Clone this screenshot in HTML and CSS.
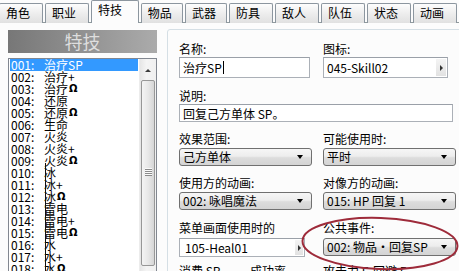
FILE: index.html
```html
<!DOCTYPE html>
<html lang="zh-CN">
<head>
<meta charset="utf-8">
<title>特技</title>
<link rel="stylesheet" href="styles.css">
</head>
<body>
<div class="tabs">
  <div class="tab">角色</div>
  <div class="tab">职业</div>
  <div class="tab sel">特技</div>
  <div class="tab">物品</div>
  <div class="tab">武器</div>
  <div class="tab">防具</div>
  <div class="tab">敌人</div>
  <div class="tab">队伍</div>
  <div class="tab">状态</div>
  <div class="tab">动画</div>
</div>
<div class="main">
  <div class="left">
    <div class="title">特技</div>
    <div class="list">
      <div class="items">
        <div class="row on"><span class="num">001:</span>治疗SP</div>
        <div class="row"><span class="num">002:</span>治疗+</div>
        <div class="row"><span class="num">003:</span>治疗<b class="om">Ω</b></div>
        <div class="row"><span class="num">004:</span>还原</div>
        <div class="row"><span class="num">005:</span>还原<b class="om">Ω</b></div>
        <div class="row"><span class="num">006:</span>生命</div>
        <div class="row"><span class="num">007:</span>火炎</div>
        <div class="row"><span class="num">008:</span>火炎+</div>
        <div class="row"><span class="num">009:</span>火炎<b class="om">Ω</b></div>
        <div class="row"><span class="num">010:</span>冰</div>
        <div class="row"><span class="num">011:</span>冰+</div>
        <div class="row"><span class="num">012:</span>冰<b class="om">Ω</b></div>
        <div class="row"><span class="num">013:</span>雷电</div>
        <div class="row"><span class="num">014:</span>雷电+</div>
        <div class="row"><span class="num">015:</span>雷电<b class="om">Ω</b></div>
        <div class="row"><span class="num">016:</span>水</div>
        <div class="row"><span class="num">017:</span>水+</div>
        <div class="row"><span class="num">018:</span>水<b class="om">Ω</b></div>
      </div>
      <div class="scroll">
        <div class="up"><span class="tri-up"></span></div>
        <div class="thumb"><div class="grip"></div></div>
      </div>
    </div>
  </div>
  <div class="group">
    <div class="grid">
      <div class="cell">
        <div class="lbl">名称:</div>
        <div class="input h21 w131">治疗SP<span class="caret"></span></div>
      </div>
      <div class="cell">
        <div class="lbl">图标:</div>
        <div class="input h21 w125 btnbox"><span>045-Skill02</span><span class="mini"><span class="tri-r"></span></span></div>
      </div>
      <div class="cell span2">
        <div class="lbl">说明:</div>
        <div class="input h18 w274">回复己方单体 SP。</div>
      </div>
      <div class="cell">
        <div class="lbl mb2">效果范围:</div>
        <div class="select">己方单体<span class="tri-d"></span></div>
      </div>
      <div class="cell">
        <div class="lbl mb2">可能使用时:</div>
        <div class="select w134">平时<span class="tri-d"></span></div>
      </div>
      <div class="cell">
        <div class="lbl mb2">使用方的动画:</div>
        <div class="select mbx">002: 咏唱魔法<span class="tri-d"></span></div>
      </div>
      <div class="cell">
        <div class="lbl mb2">对像方的动画:</div>
        <div class="select w134 mbx">015: HP 回复 1<span class="tri-d"></span></div>
      </div>
      <div class="cell">
        <div class="lbl mb3">菜单画面使用时的</div>
        <div class="input h19 w126 btnbox pad5 tight"><span>105-Heal01</span><span class="mini sm"><span class="tri-r"></span></span></div>
      </div>
      <div class="cell">
        <div class="lbl mb3">公共事件:</div>
        <div class="select w134 h19 tight">002: 物品・回复SP<span class="tri-d"></span></div>
      </div>
      <div class="cell duo">
        <span class="sub s71">消费 SP</span><span class="sub">成功率</span>
      </div>
      <div class="cell duo">
        <span class="sub s50">攻击力 F</span><span class="sub">回避 F</span>
      </div>
    </div>
  </div>
</div>
<svg class="mark" width="459" height="271" viewBox="0 0 459 271">
  <ellipse cx="380" cy="243.5" rx="77.5" ry="25.5" fill="none" stroke="#9e2b3a" stroke-width="2" transform="rotate(2 380 243.5)"/>
</svg>
</body>
</html>
```

FILE: styles.css
```css
* { box-sizing: border-box; }
html, body { margin: 0; padding: 0; }
body {
  width: 459px;
  height: 271px;
  overflow: hidden;
  position: relative;
  background: #fcfcfc;
  font-family: "Noto Sans CJK SC", "Noto Sans", sans-serif;
  font-size: 12px;
  color: #000;
}

/* tabs */
.tabs {
  display: flex;
  align-items: flex-end;
  height: 23px;
  border-bottom: 1px solid #919b9c;
  background: #fcfcfc;
}
.tab {
  width: 46px;
  height: 20px;
  margin-right: 2px;
  margin-bottom: -1px;
  padding-left: 6px;
  border: 1px solid #8c969f;
  border-bottom: none;
  border-radius: 2px 2px 0 0;
  background: linear-gradient(#fdfdfd, #ececec 55%, #e1e1e1);
  line-height: 18px;
  white-space: nowrap;
}
.tab:first-child { margin-left: -1px; }
.tab.sel {
  width: 50px;
  height: 23px;
  padding-left: 6px;
  background: #fcfcfc;
  line-height: 18px;
  position: relative;
}
.tab.sel + .tab, .tab.sel + .tab + .tab { width: 44px; }

/* main */
.main {
  display: flex;
  align-items: flex-start;
  gap: 10px;
  padding: 7px 0 0 8px;
}
.left { width: 149px; flex: none; }
.title {
  height: 23px;
  background: linear-gradient(to right, #777, #ababab);
  color: #dedede;
  font-size: 18px;
  line-height: 23px;
  text-align: center;
}
.list {
  position: relative;
  margin-top: 5px;
  height: 230px;
  border: 1px solid #828790;
  background: #fff;
  display: flex;
}
.list::after {
  content: "";
  position: absolute;
  left: 36px;
  top: 104px;
  width: 1px;
  height: 130px;
  background: #111;
}
.items { width: 130px; padding-left: 1px; }
.row {
  height: 12px;
  line-height: 12px;
  padding-left: 1px;
  white-space: nowrap;
  display: flex;
}
.row.on { background: #3399ff; color: #fff; }
.num { width: 33px; flex: none; }
.om {
  font-family: "DejaVu Sans", sans-serif;
  font-size: 10px;
  font-weight: bold;
  margin-left: 1px;
}
.scroll {
  width: 17px;
  margin-left: 1px;
  background: linear-gradient(to right, #e6e6e6, #f4f4f4 40%, #f0f0f0);
  border-left: 1px solid #ececec;
}
.up {
  height: 18px;
  display: flex;
  align-items: center;
  justify-content: center;
  padding-top: 4px;
}
.tri-up {
  width: 0; height: 0;
  border-left: 3px solid transparent;
  border-right: 3px solid transparent;
  border-bottom: 3px solid #3c3c3c;
}
.thumb {
  margin: 3px 1px 0 1px;
  height: 186px;
  border: 1px solid #979797;
  border-radius: 2px;
  background: linear-gradient(to right, #f4f4f4, #e8e8e8 50%, #d6d6d6);
  padding-top: 87px;
  display: flex;
  justify-content: center;
}
.grip {
  width: 7px;
  height: 8px;
  background: repeating-linear-gradient(#fafafa 0 1px, #8a8a8a 1px 2px);
}

/* group */
.group {
  flex: none;
  margin-top: -1px;
  width: 300px;
  height: 260px;
  border: 1px solid #d5dfe5;
  border-radius: 3px;
  padding: 12px 0 0 11px;
}
.grid {
  display: grid;
  grid-template-columns: 133px 134px;
  column-gap: 11px;
  row-gap: 10px;
}
.cell { display: flex; flex-direction: column; align-items: flex-start; }
.span2 { grid-column: 1 / 3; }
.lbl { height: 14px; line-height: 14px; margin-bottom: 1px; white-space: nowrap; }
.mb2 { margin-bottom: 2px; }
.mb3 { margin-bottom: 3px; }

.input {
  border: 1px solid #abb0b7;
  border-top-color: #9aa0a8;
  background: #fff;
  padding-left: 3px;
  display: flex;
  align-items: center;
  white-space: nowrap;
}
.h21 { height: 21px; margin-bottom: 1px; }
.h18 { height: 18px; }
.h19 { height: 19px; }
.w131 { width: 131px; }
.w125 { width: 125px; }
.w126 { width: 126px; }
.w274 { width: 274px; }
.w134 { width: 134px; }
.pad5 { padding-left: 5px; }
.caret { width: 1px; height: 13px; background: #000; margin-left: 1px; }
.btnbox { justify-content: space-between; padding-right: 0; }
.mini {
  width: 10px;
  height: 17px;
  margin-right: 1px;
  background: linear-gradient(#f4f4f4, #e2e2e2);
  display: flex;
  align-items: center;
  justify-content: center;
}
.mini.sm { width: 8px; height: 15px; margin-right: 1px; }
.tri-r {
  width: 0; height: 0;
  border-top: 3px solid transparent;
  border-bottom: 3px solid transparent;
  border-left: 3px solid #333;
}

.select {
  width: 133px;
  height: 18px;
  border: 1px solid #707070;
  border-radius: 3px;
  background: linear-gradient(#f6f6f6, #ededed 45%, #dcdcdc 55%, #d4d4d4);
  padding: 0 8px 0 3px;
  display: flex;
  align-items: center;
  justify-content: space-between;
  white-space: nowrap;
  line-height: 16px;
}
.mbx { margin-bottom: 1px; }
.tight { margin-bottom: -3px; }
.tri-d {
  width: 0; height: 0;
  border-left: 3.5px solid transparent;
  border-right: 3.5px solid transparent;
  border-top: 4px solid #000;
}
.duo { flex-direction: row; }
.sub { line-height: 14px; white-space: nowrap; }
.s71 { width: 71px; }
.s50 { width: 50px; }

.mark {
  position: absolute;
  left: 0;
  top: 0;
  pointer-events: none;
}
```
